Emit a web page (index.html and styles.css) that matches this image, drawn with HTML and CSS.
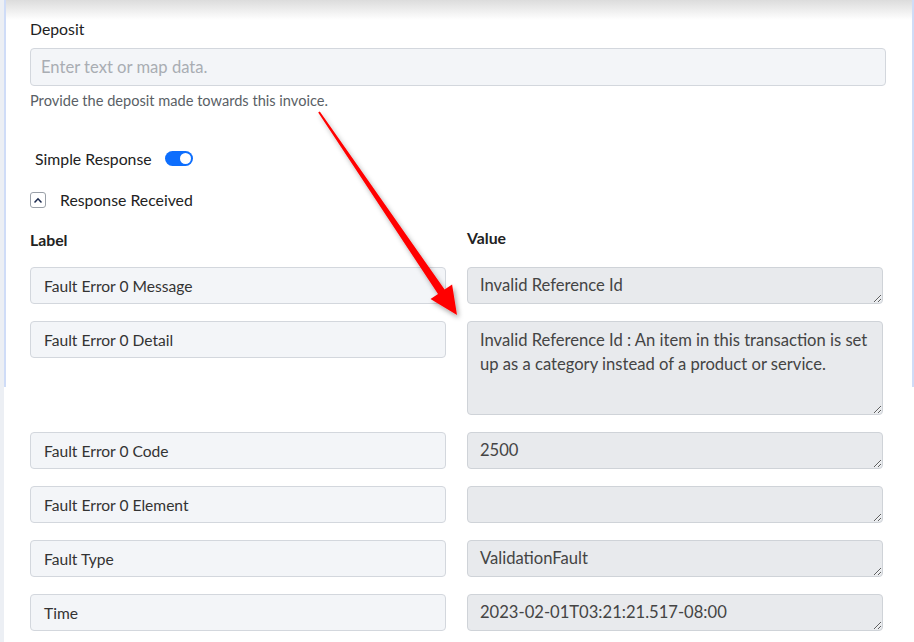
FILE: index.html
```html
<!DOCTYPE html>
<html lang="en">
<head>
  <meta charset="UTF-8" />
  <meta name="viewport" content="width=device-width, initial-scale=1.0"/>
  <title>Invoice step</title>
  <link rel="stylesheet" href="styles.css">
</head>
<body>
  <div class="panel">
    <div class="campo">
      <label class="etiqueta">Deposit</label>
      <input type="text" class="entrada" placeholder="Enter text or map data." />
      <div class="ayuda">Provide the deposit made towards this invoice.</div>
    </div>

    <div class="interruptor">
      <span>Simple Response</span>
      <span class="toggle"><span class="bola"></span></span>
    </div>

    <div class="plegable">
      <span class="chevron">
        <svg width="8" height="6" viewBox="0 0 8 6"><path d="M1 5 L4 1.8 L7 5" fill="none" stroke="#1d2b4f" stroke-width="1.6" stroke-linecap="round"/></svg>
      </span>
      <span>Response Received</span>
    </div>

    <div class="tabla">
      <div class="cabecera">Label</div>
      <div class="cabecera valor">Value</div>

      <div class="caja">Fault Error 0 Message</div>
      <textarea class="area" rows="1">Invalid Reference Id</textarea>

      <div class="caja">Fault Error 0 Detail</div>
      <textarea class="area alta" rows="3">Invalid Reference Id : An item in this transaction is set up as a category instead of a product or service.</textarea>

      <div class="caja">Fault Error 0 Code</div>
      <textarea class="area" rows="1">2500</textarea>

      <div class="caja">Fault Error 0 Element</div>
      <textarea class="area" rows="1"></textarea>

      <div class="caja">Fault Type</div>
      <textarea class="area" rows="1">ValidationFault</textarea>

      <div class="caja">Time</div>
      <textarea class="area" rows="1">2023-02-01T03:21:21.517-08:00</textarea>
    </div>
  </div>

  <!-- flecha roja encima del formulario -->
  <svg class="flecha" width="914" height="642" viewBox="0 0 914 642">
    <defs>
      <filter id="sombra" x="-20%" y="-20%" width="140%" height="140%">
        <feDropShadow dx="2" dy="3" stdDeviation="2.5" flood-color="#000" flood-opacity="0.35"/>
      </filter>
    </defs>
    <path d="M318.2 112.6 L319.8 111.4 L444.6 289.6 L452.1 284.5 L457 315 L430.5 299.1 L438 294 Z" fill="#ff0000" filter="url(#sombra)"/>
  </svg>
</body>
</html>
```

FILE: styles.css
```css
body {
  margin: 0;
  font-family: Lato, 'Noto Sans', sans-serif;
  background: #fff;
  color: #222;
  position: relative;
  min-height: 642px;
  overflow: hidden;
}

/* sombra superior del contenedor */
body::before {
  content: "";
  position: absolute;
  left: 0;
  top: 0;
  right: 0;
  height: 20px;
  background: linear-gradient(to bottom, #dcdcdc, rgba(255, 255, 255, 0));
  pointer-events: none;
}

.panel {
  border-left: 4px solid #eceff4;
  padding: 19px 0 0 26px;
  min-height: 642px;
  box-sizing: border-box;
  position: relative;
}

/* líneas azules laterales */
.panel::before,
.panel::after {
  content: "";
  position: absolute;
  top: 0;
  height: 387px;
  width: 2px;
  background: #cfdcf7;
}

.panel::before {
  left: 0;
}

.panel::after {
  left: 908px;
}

.etiqueta {
  display: block;
  font-size: 15.8px;
  line-height: 20px;
  color: #222;
}

.entrada {
  display: block;
  box-sizing: border-box;
  width: 856px;
  height: 38px;
  margin-top: 9px;
  padding: 0 10px;
  font-family: inherit;
  font-size: 16.6px;
  background: #f3f5f8;
  border: 1px solid #d3d7dd;
  border-radius: 4px;
}

.entrada::placeholder {
  color: #a9adb3;
}

.ayuda {
  margin-top: 6px;
  font-size: 14.6px;
  color: #5a5f66;
}

.interruptor {
  display: flex;
  align-items: center;
  gap: 13px;
  margin: 40px 0 0 5px;
  font-size: 15.8px;
  height: 18px;
}

.toggle {
  width: 28px;
  height: 15px;
  border-radius: 8px;
  background: #0d6efd;
  position: relative;
}

.bola {
  position: absolute;
  right: 2px;
  top: 2px;
  width: 11px;
  height: 11px;
  border-radius: 50%;
  background: #fff;
}

.plegable {
  display: flex;
  align-items: center;
  gap: 14px;
  margin-top: 23px;
  font-size: 15.8px;
}

.chevron {
  width: 16px;
  height: 16px;
  box-sizing: border-box;
  border: 1px solid #9aa0a8;
  border-radius: 3px;
  display: flex;
  align-items: center;
  justify-content: center;
}

.tabla {
  display: grid;
  grid-template-columns: 416px 416px;
  column-gap: 21px;
  row-gap: 17px;
  margin-top: 21px;
  align-items: start;
}

.cabecera {
  font-size: 15.8px;
  font-weight: bold;
  line-height: 20px;
  color: #222;
  margin-bottom: 0;
}

.valor {
  margin-top: -2px;
}

.caja {
  box-sizing: border-box;
  height: 37px;
  padding: 0 13px;
  display: flex;
  align-items: center;
  font-size: 15.6px;
  color: #333;
  background: #f3f5f8;
  border: 1px solid #d3d7dd;
  border-radius: 4px;
}

.area {
  display: block;
  box-sizing: border-box;
  width: 416px;
  height: 37px;
  margin: 0;
  padding: 5px 12px;
  font-family: inherit;
  font-size: 16.6px;
  line-height: 24px;
  color: #444;
  background: #e8eaed;
  border: 1px solid #cfd3d8;
  border-radius: 4px;
  overflow: hidden;
}

.alta {
  height: 94px;
  padding-top: 6px;
}

.flecha {
  position: absolute;
  left: 0;
  top: 0;
  pointer-events: none;
}
```
